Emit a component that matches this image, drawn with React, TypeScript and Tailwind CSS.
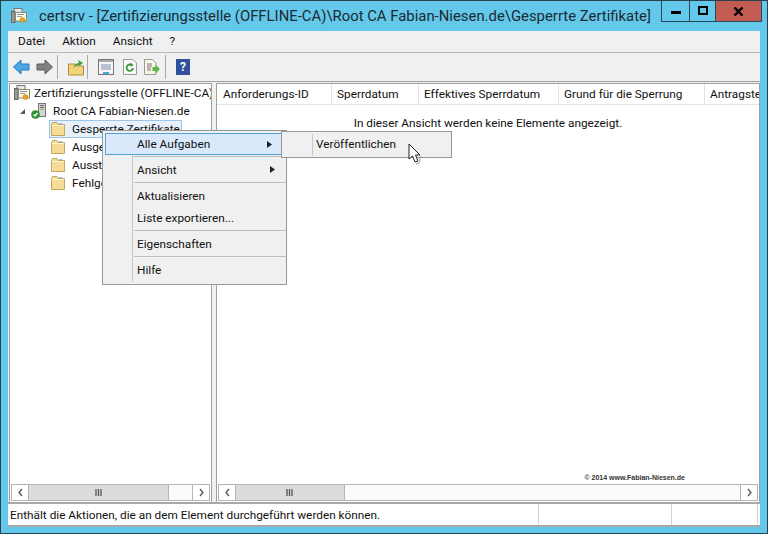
import React from "react";

const Folder = () => (
  <svg width="14" height="14" viewBox="0 0 14 14" className="shrink-0">
    <path d="M0.5 2.5V13.5H13.5V2.5H7L6 0.5H1.5Z" fill="#f6dc94" stroke="#c4a662" />
    <rect x="1" y="3" width="12" height="1" fill="#fff6d8" />
    <rect x="8" y="1" width="3" height="1" fill="#7fc4e8" />
  </svg>
);

const CertIcon = () => (
  <svg width="16" height="16" viewBox="0 0 16 16" className="shrink-0">
    <rect x="3" y="0.5" width="8" height="5" fill="#e8e8e8" stroke="#777" />
    <rect x="0.5" y="3.5" width="3.5" height="11" fill="#9a9a9a" stroke="#666" />
    <rect x="4.5" y="4.5" width="11" height="8.5" fill="#fffbe8" stroke="#8a8a70" />
    <rect x="6" y="6" width="7" height="1" fill="#7d97b5" />
    <rect x="6" y="8" width="5" height="1" fill="#a0a0a0" />
    <circle cx="11.5" cy="12" r="2.5" fill="#e9a520" stroke="#b87a10" strokeWidth="0.5" />
  </svg>
);

const ServerIcon = () => (
  <svg width="16" height="16" viewBox="0 0 16 16" className="shrink-0">
    <rect x="7.5" y="0.5" width="7" height="13" fill="#d4d4d4" stroke="#777" />
    <rect x="9" y="2" width="4" height="1" fill="#666" />
    <rect x="9" y="4" width="4" height="1" fill="#666" />
    <rect x="9" y="6" width="4" height="1" fill="#8cc63f" />
    <circle cx="4.5" cy="11.5" r="4" fill="#2f9a2f" stroke="#1e6f1e" strokeWidth="0.5" />
    <path d="M2.5 11.5L4 13L6.5 10" stroke="#fff" strokeWidth="1.3" fill="none" />
  </svg>
);

const Sep = ({ ml }: { ml: string }) => <div className={`h-[24px] w-px bg-[#a9a9a9] ${ml}`} />;

const Scrollbar = ({ thumb }: { thumb: string }) => (
  <div className="flex h-[17px] items-stretch border border-[#b4b4b4] bg-[#fbfbfb]">
    <div className="flex w-[17px] items-center justify-center border-r border-[#b4b4b4] bg-white">
      <svg width="7" height="9" viewBox="0 0 7 9"><path d="M5 1L2 4.5L5 8" fill="none" stroke="#555" strokeWidth="1.3" /></svg>
    </div>
    <div className={`flex items-center justify-center border-r border-[#b4b4b4] bg-[#dcdcdc] ${thumb}`}>
      <svg width="8" height="7" viewBox="0 0 8 7"><path d="M1 0V7M3.5 0V7M6 0V7" stroke="#555" strokeWidth="1.3" /></svg>
    </div>
    <div className="flex-1" />
    <div className="flex w-[17px] items-center justify-center border-l border-[#b4b4b4] bg-white">
      <svg width="7" height="9" viewBox="0 0 7 9"><path d="M2 1L5 4.5L2 8" fill="none" stroke="#555" strokeWidth="1.3" /></svg>
    </div>
  </div>
);

const Arrow = () => (
  <svg width="5" height="7" viewBox="0 0 5 7" className="absolute right-[11px] top-[7px]"><path d="M0 0L5 3.5L0 7Z" fill="#222" /></svg>
);

const TreeFolder = ({ label, selected }: { label: string; selected?: boolean }) => (
  <div className="flex h-[18px] items-center pl-[39px]">
    <div className={`flex h-[18px] items-center gap-[7px] pr-[1px] ${selected ? "border border-[#9cc4e4] bg-[#e6f1fb] pl-px" : "pl-[2px]"}`}>
      <Folder />
      <span>{label}</span>
    </div>
  </div>
);

const Col = ({ w, label }: { w: string; label: string }) => (
  <div className={`flex shrink-0 items-center border-r border-[#e3e3e3] ${w}`}>{label}</div>
);

const MenuItem = ({ label, arrow }: { label: string; arrow?: boolean }) => (
  <div className="relative flex h-[22px] items-center pl-[34px]">
    {label}
    {arrow && <Arrow />}
  </div>
);

const MenuSep = () => <div className="my-[1px] ml-[31px] h-[2px] border-t border-[#bdbdbd]" />;

export default function App() {
  return (
    <div
      className="relative flex h-[534px] w-[768px] flex-col overflow-hidden border border-[#26414d] bg-[#63c8ea] text-[11.8px] leading-[19px] text-[#111]"
      style={{ fontFamily: 'Roboto, "Noto Sans", sans-serif' }}
    >
      {/* title bar */}
      <div className="flex h-[30px] shrink-0 items-center pl-[10px]">
        <CertIcon />
        <span className="ml-[12px] whitespace-nowrap text-[14.88px] text-[#1b2a33]">
          certsrv - [Zertifizierungsstelle (OFFLINE-CA)\Root CA Fabian-Niesen.de\Gesperrte Zertifikate]
        </span>
        <div className="ml-auto mr-[5px] flex h-[21px] self-start border-x border-b border-[#2b4a58]">
          <div className="flex w-[28px] items-center justify-center border-r border-[#2b4a58]">
            <div className="mt-[2px] h-[3px] w-[10px] bg-black" />
          </div>
          <div className="flex w-[26px] items-center justify-center border-r border-[#2b4a58]">
            <div className="mb-[2px] h-[9px] w-[10px] border-2 border-black" />
          </div>
          <div className="flex w-[45px] items-center justify-center bg-[#c25b52]">
            <svg width="11" height="9" viewBox="0 0 11 9"><path d="M1.5 0.5L9.5 8.5M9.5 0.5L1.5 8.5" stroke="#000" strokeWidth="2.4" /></svg>
          </div>
        </div>
      </div>

      {/* client */}
      <div className="mx-[7px] flex h-[496px] flex-col bg-[#f0f0f0]">
        {/* menu */}
        <div className="flex h-[22px] shrink-0 items-center gap-[17px] border-b border-[#b8b8c0] pl-[10px]">
          <span>Datei</span>
          <span>Aktion</span>
          <span>Ansicht</span>
          <span>?</span>
        </div>
        {/* toolbar */}
        <div className="flex h-[29px] shrink-0 items-center border-b border-[#a0a0a0] pl-[5px]">
          <svg width="17" height="16" viewBox="0 0 17 16"><path d="M8 1L0.5 8L8 15V11H16V5H8Z" fill="#4aa8e8" stroke="#2a78b8" /></svg>
          <svg width="17" height="16" viewBox="0 0 17 16" className="ml-[6px]"><path d="M9 1L16.5 8L9 15V11H1V5H9Z" fill="#808080" stroke="#5a5a5a" /></svg>
          <Sep ml="ml-[4px]" />
          <svg width="16" height="17" viewBox="0 0 16 17" className="ml-[10px]">
            <path d="M0.5 5H7L8 7H15.5V16H0.5Z" fill="#f3d27a" stroke="#b08d3c" />
            <path d="M5 9C7 5 9 4 11 4L10 1L15 4L11 7L11 6C9 6 7 7 5 9Z" fill="#3ea03e" />
          </svg>
          <Sep ml="ml-[3px]" />
          <svg width="16" height="16" viewBox="0 0 16 16" className="ml-[10px]">
            <rect x="0.5" y="0.5" width="15" height="15" fill="#f4f4f4" stroke="#777" />
            <rect x="1" y="1" width="14" height="2" fill="#aaa" />
            <path d="M3 6H13M3 8H13M3 10H13" stroke="#7d8fa8" />
            <rect x="5" y="13" width="6" height="2" fill="#40a8e0" />
          </svg>
          <svg width="14" height="16" viewBox="0 0 14 16" className="ml-[9px]">
            <path d="M0.5 0.5H9.5L13.5 4V15.5H0.5Z" fill="#f8f8f8" stroke="#999" />
            <path d="M10 9A3.2 3.2 0 1 1 8.5 6" fill="none" stroke="#3a9a3a" strokeWidth="1.8" />
            <path d="M7.5 3.5L10.5 6L7.5 8Z" fill="#3a9a3a" />
          </svg>
          <svg width="16" height="16" viewBox="0 0 16 16" className="ml-[7px]">
            <path d="M0.5 0.5H8.5L12 4V15.5H0.5Z" fill="#faf6e2" stroke="#999" />
            <path d="M3 5H8M3 7H8M3 9H7M3 11H7" stroke="#777" />
            <path d="M8.5 8H11.5V5.5L16 10L11.5 14.5V12H8.5Z" fill="#5cb84a" />
          </svg>
          <Sep ml="ml-[5px]" />
          <div className="ml-[10px] flex h-[16px] w-[14px] items-center justify-center bg-[#30509c] text-[12px] font-bold leading-none text-white">?</div>
        </div>

        {/* panes */}
        <div className="flex h-[422px] shrink-0 gap-[4px] border-b-2 border-[#a8a8a8] pl-[1px] pt-[1px]">
          <div className="flex w-[203px] flex-col border-x border-t border-[#a0a0a0] bg-white">
            <div className="flex-1 overflow-hidden whitespace-nowrap">
              <div className="flex h-[18px] items-center gap-[4px] pl-[4px]"><CertIcon /><span>Zertifizierungsstelle (OFFLINE-CA)</span></div>
              <div className="flex h-[18px] items-center pl-[9px]">
                <svg width="7" height="7" viewBox="0 0 7 7" className="mr-[5px]"><path d="M6 1V6H1Z" fill="#555" /></svg>
                <ServerIcon />
                <span className="ml-[6px]">Root CA Fabian-Niesen.de</span>
              </div>
              <TreeFolder label="Gesperrte Zertifikate" selected />
              <TreeFolder label="Ausgestellte Zertifikate" />
              <TreeFolder label="Ausstehende Anforderungen" />
              <TreeFolder label="Fehlgeschlagene Anforderungen" />
            </div>
            <div className="mb-[1px] px-px"><Scrollbar thumb="w-[140px]" /></div>
          </div>
          <div className="flex min-w-0 flex-1 flex-col border-x border-t border-[#a0a0a0] bg-white">
            <div className="flex h-[21px] shrink-0 overflow-hidden whitespace-nowrap border-b border-[#e3e3e3]">
              <Col w="w-[115px] pl-[6px]" label="Anforderungs-ID" />
              <Col w="w-[87px] pl-[5px]" label="Sperrdatum" />
              <Col w="w-[140px] pl-[5px]" label="Effektives Sperrdatum" />
              <Col w="w-[146px] pl-[5px]" label="Grund für die Sperrung" />
              <div className="flex items-center pl-[5px]">Antragste</div>
            </div>
            <div className="pt-[9px] text-center">In dieser Ansicht werden keine Elemente angezeigt.</div>
            <div className="flex-1" />
            <div className="mb-[2px] h-[8px] pr-[74px] text-right text-[7px] font-bold leading-[8px] text-[#333]" style={{ fontFamily: '"Liberation Sans", sans-serif' }}>© 2014 www.Fabian-Niesen.de</div>
            <div className="mb-[1px] px-px"><Scrollbar thumb="w-[109px]" /></div>
          </div>
        </div>

        {/* status */}
        <div className="flex min-h-0 flex-1 items-stretch border-b-2 border-[#a8a8a8] bg-white">
          <div className="flex w-[531px] items-center whitespace-nowrap border-r border-[#d4d4d4] pl-[2px] pt-[2px]">
            Enthält die Aktionen, die an dem Element durchgeführt werden können.
          </div>
          <div className="w-[133px] border-r border-[#d4d4d4]" />
          <div className="w-[86px] border-r border-[#d4d4d4]" />
        </div>
      </div>

      {/* context menu */}
      <div className="absolute left-[101px] top-[129px] h-[155px] w-[185px] border border-[#979797] bg-[#f0f0f0]">
        <div className="absolute bottom-[2px] left-[29px] top-[2px] w-px bg-[#c8c8c8]" />
        <div className="relative">
          <div className="relative mx-[2px] mt-[2px] flex h-[22px] items-center border border-[#4fa3d8] bg-[#d9e9fb] pl-[31px]">
            Alle Aufgaben
            <Arrow />
          </div>
          <div className="mt-[1px]" />
          <MenuSep />
          <MenuItem label="Ansicht" arrow />
          <MenuSep />
          <MenuItem label="Aktualisieren" />
          <MenuItem label="Liste exportieren..." />
          <MenuSep />
          <MenuItem label="Eigenschaften" />
          <MenuSep />
          <MenuItem label="Hilfe" />
        </div>
      </div>

      {/* submenu */}
      <div className="absolute left-[280px] top-[130px] flex h-[27px] w-[171px] items-center border border-[#979797] bg-[#f0f0f0]">
        <div className="ml-[30px] h-[22px] w-px bg-[#c8c8c8]" />
        <span className="ml-[3px]">Veröffentlichen</span>
      </div>

      {/* cursor */}
      <svg width="16" height="22" viewBox="0 0 16 22" className="absolute left-[407px] top-[142px]">
        <path d="M1 1V16L4.5 13L7 19L10 18L7.5 12H12Z" fill="#fff" stroke="#222" strokeWidth="1" />
        <path d="M13 13L11 20L8 21" fill="none" stroke="#999" strokeWidth="1.5" opacity="0.6" />
      </svg>
    </div>
  );
}
